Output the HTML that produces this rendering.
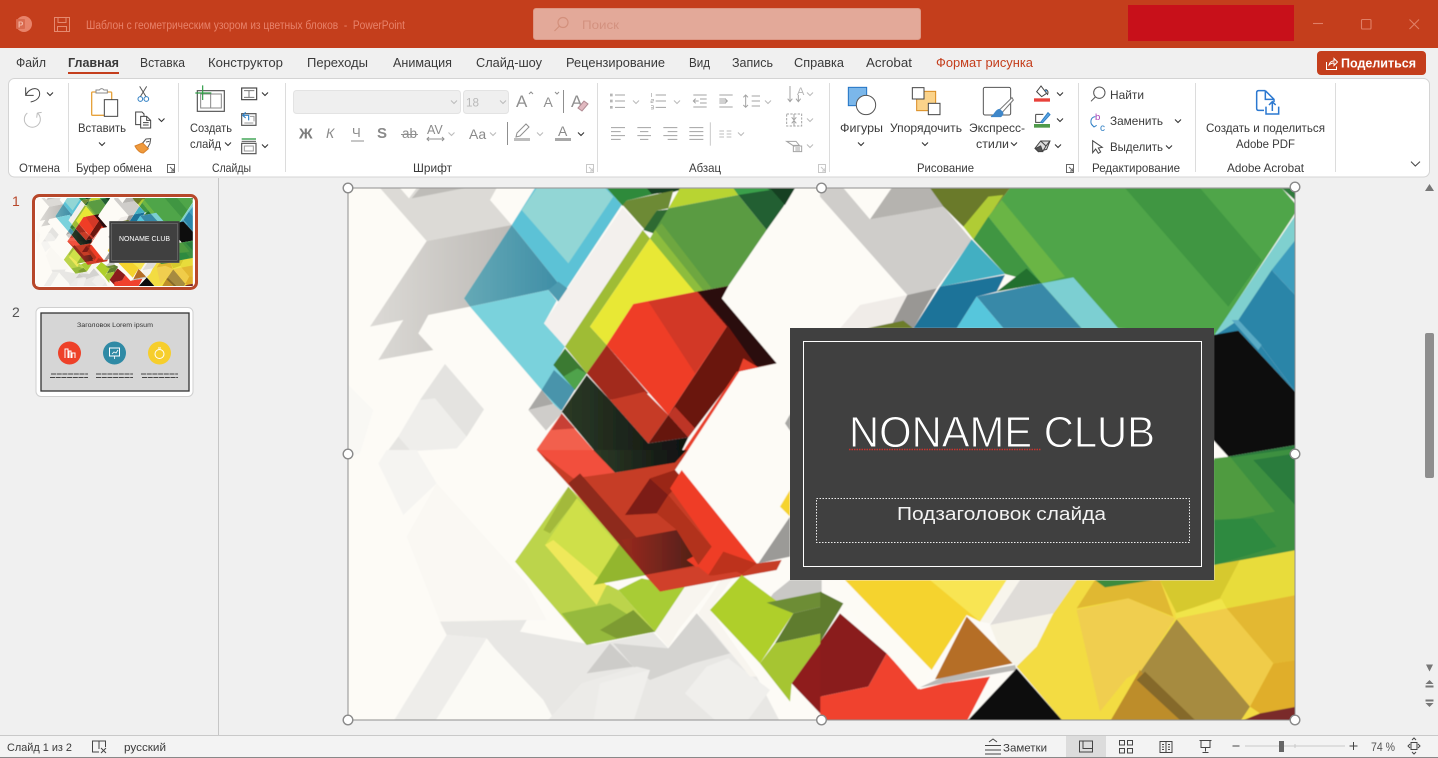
<!DOCTYPE html>
<html lang="ru"><head><meta charset="utf-8"><title>PowerPoint</title>
<style>
html,body{margin:0;padding:0;width:1438px;height:758px;overflow:hidden;background:#f0f0f0}
svg{position:absolute;left:0;top:0;font-family:"Liberation Sans","Noto Sans CJK SC",sans-serif}
text{fill:#3a3a3a}
</style></head><body>
<svg width="1438" height="758" viewBox="0 0 1438 758" xmlns="http://www.w3.org/2000/svg">
<defs>
<clipPath id="sc"><rect x="348" y="188" width="947" height="532"/></clipPath>
<filter id="soft" x="0" y="0" width="100%" height="100%"><feGaussianBlur stdDeviation=".55"/></filter>
<filter id="bt" x="0" y="0" width="100%" height="100%"><feGaussianBlur stdDeviation="2.2"/></filter>
<linearGradient id="g1" x1="0" x2="1" y1="0" y2="0"><stop offset="0" stop-color="#dcdad6"/><stop offset="1" stop-color="#bdbab6"/></linearGradient>
<linearGradient id="g2" x1="0" x2="1" y1="0" y2="0"><stop offset="0" stop-color="#65a9b6"/><stop offset="1" stop-color="#3f8ea6"/></linearGradient>
<linearGradient id="g3" x1="0" x2="1" y1="0" y2="0"><stop offset="0" stop-color="#2b3a26"/><stop offset="1" stop-color="#0f1110"/></linearGradient>
<linearGradient id="g4" x1="0" x2="1" y1="0" y2="0"><stop offset="0" stop-color="#9a2a20"/><stop offset="1" stop-color="#4e2018"/></linearGradient>
<g id="art" clip-path="url(#sc)">
<g filter="url(#soft)">
<rect x="340" y="180" width="965" height="550" fill="#fdfbf6"/>
<!-- upper-left quadrant -->
<g transform="translate(340 180) scale(.33333)">
<polygon points="120,24 470,24 450,60 515,135 260,183" fill="#dcdad6"/>
<polygon points="180,24 230,24 207,55" fill="#fdfbf6"/>
<polygon points="215,55 240,24 375,24" fill="#bebcb8"/>
<polygon points="260,183 515,135 372,355 390,380 265,405 235,460 280,510 115,540 190,420 90,440" fill="url(#g1)"/>
<polygon points="0,590 100,690 60,820 0,840" fill="#f9f8f4"/>
<polygon points="315,552 432,688 380,770 240,660" fill="#e4e3e0"/>
<polygon points="240,660 285,655 380,770 350,805 190,815 175,770" fill="#efeeeb"/>
<polygon points="120,845 175,770 240,845" fill="#e6e5e2"/>
<polygon points="585,24 800,24 845,75 680,325 655,310 515,135" fill="#5cc2d6"/>
<polygon points="590,24 795,24 820,50 685,250 545,90" fill="#92d6d5"/>
<polygon points="515,135 655,310 625,330 390,380 372,355" fill="url(#g2)"/>
<polygon points="625,330 655,305 682,325 655,365" fill="#4d9bb0"/>
<polygon points="390,380 625,330 650,362 612,430 675,500 642,555 705,625 660,695 605,630" fill="#7ad2dc"/>
<polygon points="605,630 642,570 705,628 665,692" fill="#4a94ab"/>
<polygon points="605,630 640,672 565,690" fill="#a9a8a5"/>
<polygon points="565,690 640,672 668,697 618,752" fill="#cfcdca"/>
<polygon points="848,82 908,150 675,500 612,430" fill="#f3f0ed"/>
<polygon points="800,24 1020,24 860,62 848,78" fill="#2f8a3a"/>
<polygon points="920,24 1040,24 1000,36 935,42" fill="#123f20"/>
<polygon points="1020,24 1180,24 1195,45 985,85" fill="#b8d432"/>
<polygon points="860,62 1000,32 985,85 950,92 915,150 848,75" fill="#6d8a35"/>
<polygon points="950,92 985,88 940,160 910,150" fill="#2f6a33"/>
<polygon points="908,150 930,175 750,440 800,495 740,580 675,500" fill="#9fbc36"/>
<polygon points="930,175 1070,335 880,372 800,495 750,440" fill="#e8e834"/>
<polygon points="985,85 1195,45 1280,150 1165,318 1085,332 945,150" fill="#5a9b42"/>
<polygon points="945,150 965,130 1115,325 1085,332" fill="#6ea73f"/>
<polygon points="930,175 945,150 1090,332 1065,337" fill="#8dbd3d"/>
<polygon points="1180,24 1365,24 1330,80 1280,150 1195,45" fill="#205f30"/>
<polygon points="1195,45 1180,24 1280,24 1290,30" fill="#3aa04c"/>
<polygon points="1290,24 1365,24 1335,75" fill="#133f20"/>
<polygon points="1070,335 1165,318 1145,355 1310,550 1195,575 1045,772 985,705 1160,440" fill="#6b1309"/>
<polygon points="1165,318 1145,355 1310,550 1250,560 1165,440 1075,335" fill="#2a0a08"/>
<polygon points="880,372 1070,335 1160,440 985,705 800,495" fill="#ef3d25"/>
<polygon points="925,365 1070,335 1160,440 1065,580" fill="#d23726"/>
<polygon points="800,495 925,640 810,660 740,580" fill="#a22a1c"/>
<polygon points="810,660 915,635 985,705 925,790" fill="#c63a28"/>
<polygon points="985,705 1045,772 925,790" fill="#66130b"/>
<polygon points="985,705 1005,680 1065,745 1045,772" fill="#bd3428"/>
<polygon points="675,505 740,580 705,630 640,555" fill="#3a7a30"/>
<polygon points="670,590 712,565 740,580 705,630" fill="#4fa34b"/>
<polygon points="740,585 810,660 925,790 1045,772 1010,845 790,845 665,695" fill="url(#g3)"/>
<polygon points="665,700 790,845 620,845 590,808" fill="#f2604d"/>
<polygon points="665,700 705,745 635,750" fill="#c84036"/>
<polygon points="1195,575 1210,535 1255,562" fill="#e8412a"/>
<polygon points="1190,575 1198,575 1022,845 1008,845" fill="#e8412a"/>
<polygon points="1335,730 1352,700 1352,755" fill="#a9a8a5"/>
</g>
<!-- upper-right quadrant -->
<g transform="translate(820 180) scale(.33333)">
<polygon points="0,24 70,24 150,118 370,80 455,180 350,325 262,345 0,50" fill="#cfcdca"/>
<polygon points="215,24 330,24 370,80 150,118" fill="#b5b3af"/>
<polygon points="120,375 262,345 210,445 60,445" fill="#f0ece8"/>
<polygon points="262,345 350,325 280,445 210,445" fill="#999794"/>
<polygon points="570,24 1385,24 1425,70 1425,100 1185,465 895,445 780,445 665,310 505,110" fill="#50a548"/>
<polygon points="915,24 1140,24 1325,240 1225,380" fill="#3f9642"/>
<polygon points="1385,24 1430,24 1430,65" fill="#2f7a3a"/>
<polygon points="330,24 570,24 505,110 430,140 370,80" fill="#6a7a2c"/>
<polygon points="505,50 550,45 460,178 430,140" fill="#b0cc34"/>
<polygon points="505,110 545,60 735,290 665,310" fill="#6bb545"/>
<polygon points="460,178 505,110 665,310 555,282" fill="#3f9642"/>
<polygon points="530,335 620,265 665,310" fill="#20702f"/>
<polygon points="455,178 555,282 360,320" fill="#43afc2"/>
<polygon points="360,320 555,285 530,335 470,350 410,445 280,445" fill="#1a7399"/>
<polygon points="470,350 665,310 785,445 550,445" fill="#3789a8"/>
<polygon points="470,350 550,445 410,445" fill="#57c6dc"/>
<polygon points="665,310 760,292 895,445 785,445" fill="#7ccfd2"/>
<polygon points="140,445 250,422 280,445" fill="#6d7d2a"/>
<polygon points="1430,100 1430,175 1255,420 1180,470" fill="#7fd0cf"/>
<polygon points="1430,175 1430,350 1355,270" fill="#3d9dbd"/>
<polygon points="1355,270 1430,350 1430,640 1325,500 1255,420" fill="#2a85a8"/>
<polygon points="1255,420 1325,500 1430,640 1255,452 1180,470" fill="#2a85a8"/>
<polygon points="1235,420 1255,420 1325,495 1315,510" fill="#5aabc5"/>
<polygon points="1180,465 1255,452 1430,640 1430,795 1225,830 1180,780" fill="#10100e"/>
<polygon points="1225,830 1430,795 1430,845 1180,845" fill="#2c7a3c"/>
</g>
<!-- lower-left quadrant -->
<g transform="translate(340 450) scale(.33333)">
<polygon points="115,40 140,0 230,0 290,100 190,195" fill="#f5f4f1"/>
<polygon points="200,260 290,100 560,400 620,510 300,515" fill="#faf8f3"/>
<polygon points="300,515 560,510 540,545 760,585 940,548 985,595 1070,490 1250,680 1320,815 640,815 440,565 320,555" fill="#e8e7e4"/>
<polygon points="160,815 320,555 440,565 285,815" fill="#eeedea"/>
<polygon points="285,815 440,570 610,750 645,815" fill="#fbfaf5"/>
<polygon points="740,670 810,580 880,650" fill="#cdccc9"/>
<polygon points="820,580 985,595 1070,490 1170,610 1060,640 930,690 880,650" fill="#d4d3d0"/>
<polygon points="725,700 890,650 930,660 760,815 620,815" fill="#ecebe8"/>
<polygon points="780,700 930,660 880,815 760,815" fill="#f0efec"/>
<polygon points="1035,730 1100,650 1165,625 1290,720 1220,815 1130,815" fill="#f0efec"/>
<polygon points="945,545 1035,410 1130,395 1015,540 985,592" fill="#f8f5ef"/>
<polygon points="1075,490 1150,380 1180,380 1110,480 1250,680 1230,680" fill="#f8f5ef"/>
<polygon points="525,335 685,110 850,275 760,405 805,405 835,420 945,545 740,585" fill="#bcd44b"/>
<polygon points="610,240 685,110 712,145 630,250" fill="#a3b93a"/>
<polygon points="615,285 710,145 835,285 765,400" fill="#cfe04a"/>
<polygon points="615,285 640,270 800,405 770,465" fill="#efe85a"/>
<polygon points="665,490 810,460 945,545 740,585" fill="#96ba3c"/>
<polygon points="780,540 880,480 945,545 830,565" fill="#7d9b33"/>
<polygon points="835,420 905,385 1035,410 945,545" fill="#a8cc35"/>
<polygon points="760,405 840,280 920,375 835,392" fill="#93b62e"/>
<polygon points="590,0 760,0 825,68 1005,35 1035,0 1045,0 1005,60 1250,340 1325,330 1310,360 960,425 690,110" fill="#c63d25"/>
<polygon points="590,0 760,0 825,68 700,85" fill="#f2503c"/>
<polygon points="760,0 1040,0 1005,38 825,68" fill="url(#g3)"/>
<polygon points="685,100 720,70 975,360 915,375" fill="#8e2a1d"/>
<polygon points="845,270 1010,240 1075,345 915,375" fill="url(#g4)"/>
<polygon points="855,195 930,85 985,135 950,190" fill="#7c1c12"/>
<polygon points="930,85 1005,60 1030,90 985,135" fill="#9a2618"/>
<polygon points="990,115 1025,60 1250,340 1180,350 1100,375 1040,330 1115,290" fill="#ef3e26"/>
<polygon points="950,190 985,135 1115,290 1075,345 1010,240" fill="#b2331f"/>
<polygon points="1105,375 1150,305 1250,340 1195,380" fill="#bd301d"/>
<polygon points="960,425 915,375 1075,350 1110,378 1190,365 1210,375" fill="#d0402b"/>
<polygon points="1255,340 1350,200 1350,320" fill="#9b9a97"/>
<polygon points="1320,170 1350,120 1350,200" fill="#f5d32e"/>
<polygon points="1300,430 1350,390 1445,390 1445,425 1280,458" fill="#c9c8c5"/>
<polygon points="1110,480 1205,375 1360,490 1260,640" fill="#afcf2c"/>
<polygon points="1280,458 1445,425 1445,470 1360,490" fill="#6d8d35"/>
<polygon points="1360,490 1445,470 1445,550 1305,580" fill="#5e7c2e"/>
<polygon points="1260,640 1305,580 1445,550 1445,575 1355,700 1350,755" fill="#a6c530"/>
<polygon points="1355,700 1445,575 1445,795" fill="#8f1e1c"/>
<polygon points="1320,815 1350,755 1395,815" fill="#fdfbf6"/>
</g>
<!-- lower-right quadrant -->
<g transform="translate(820 450) scale(.33333)">
<polygon points="1,425 70,460 1,575" fill="#5e7c2e"/>
<polygon points="1,575 60,490 200,610 145,710 1,740" fill="#8a1a1b"/>
<polygon points="1,740 145,710 200,610 300,718 370,700 510,680 440,815 1,815" fill="#f0432e"/>
<polygon points="770,390 1182,390 1182,345 1430,300 1430,815 730,815 590,650 700,490" fill="#f3dc42"/>
<polygon points="10,390 75,390 330,660 320,690 295,718" fill="#fdfbf5"/>
<polygon points="365,682 585,645 590,660 300,712" fill="#b9b8b5"/>
<polygon points="75,390 560,390 480,515 440,495 335,660" fill="#f5d32e"/>
<polygon points="330,390 560,390 480,515" fill="#f8e552"/>
<polygon points="440,500 578,640 345,688" fill="#b56e27"/>
<polygon points="560,390 600,390 510,520 480,515" fill="#f8f5ec"/>
<polygon points="600,390 770,390 700,490 510,525" fill="#dfdcd8"/>
<polygon points="510,525 700,490 650,590 590,650 540,600" fill="#f6f3e8"/>
<polygon points="770,475 825,390 1020,390 1060,500 925,445" fill="#e0b830"/>
<polygon points="770,480 925,445 1065,505 965,660 920,685 840,785" fill="#f0ce50"/>
<polygon points="1020,390 1182,390 1182,345 1260,330 1200,445 1070,490" fill="#d6c92f"/>
<polygon points="1260,330 1430,300 1430,435 1220,475 1200,445" fill="#e8dc3a"/>
<polygon points="1065,490 1205,447 1220,475 1070,508" fill="#f0e548"/>
<polygon points="1070,508 1290,770 1260,815 870,815 965,660" fill="#a68b40"/>
<polygon points="960,660 1085,815 870,815" fill="#bd8d2a"/>
<polygon points="950,690 975,665 1130,815 1085,815" fill="#85692a"/>
<polygon points="1070,505 1220,475 1360,640 1290,770" fill="#f0cc4a"/>
<polygon points="1220,475 1430,435 1430,630 1360,640" fill="#e3b833"/>
<polygon points="1290,770 1360,640 1430,630 1430,770 1320,790" fill="#e0ae2a"/>
<polygon points="1260,815 1320,790 1430,770 1430,815" fill="#7a2a2a"/>
<polygon points="825,390 1000,390 855,412" fill="#3d8b3d"/>
<polygon points="590,655 730,815 440,815" fill="#10100c"/>
<polygon points="1180,30 1430,-5 1430,300 1182,345" fill="#3c9040"/>
<polygon points="1182,25 1230,20 1365,185 1260,205 1182,210" fill="#4f9b40"/>
<polygon points="1182,210 1300,205 1370,290 1182,345" fill="#2f8a40"/>
<polygon points="1300,30 1430,10 1430,170" fill="#2a7c3c"/>
</g>
</g>
<!-- title box -->
<rect x="790" y="328" width="424" height="252" fill="#404040"/>
<rect x="803.500" y="341.500" width="398" height="225" fill="none" stroke="#fff" stroke-width="1"/>
</g>
</defs>

<!-- title bar -->
<rect x="0" y="0" width="1438" height="48" fill="#c43e1c"/>
<circle cx="24" cy="24" r="8" fill="#e8836a"/><rect x="16" y="19" width="9" height="10" rx="1" fill="#d96a4f"/>
<text x="18" y="27.500" font-size="8" font-weight="bold" style="fill:#f3b8a6">P</text>
<g fill="none" stroke="#e58a70" stroke-width="1"><rect x="54.500" y="17.500" width="15" height="14"/><path d="M58 17.500v5h8v-5M57.500 31.500v-5h9v5"/></g>
<text x="86" y="29" font-size="11.500" textLength="319" lengthAdjust="spacingAndGlyphs" style="fill:#e8826a">Шаблон с геометрическим узором из цветных блоков&#160;&#160;-&#160;&#160;PowerPoint</text>
<rect x="533.500" y="8.500" width="387" height="31" rx="2.500" fill="#e3a999" stroke="#dd9784"/>
<g fill="none" stroke="#d3907c" stroke-width="1.200"><circle cx="563" cy="22.500" r="5"/><path d="M559.500 26l-5 5"/></g>
<text x="582" y="29" font-size="12" textLength="37" lengthAdjust="spacingAndGlyphs" style="fill:#d3917f">Поиск</text>
<rect x="1128" y="5" width="166" height="36" fill="#c8101a"/>
<g fill="none" stroke="#e07f66" stroke-width="1.100"><path d="M1313 23.500h10"/><rect x="1361.500" y="19.500" width="9.500" height="9.500" rx="1"/><path d="M1409.500 19.500l9.500 9.500M1419 19.500l-9.500 9.500"/></g>

<!-- tabs -->
<g font-size="12.500">
<text x="16" y="67" textLength="30" lengthAdjust="spacingAndGlyphs">Файл</text>
<text x="68" y="67" textLength="51" lengthAdjust="spacingAndGlyphs" font-weight="bold">Главная</text>
<text x="140" y="67" textLength="45" lengthAdjust="spacingAndGlyphs">Вставка</text>
<text x="208" y="67" textLength="75" lengthAdjust="spacingAndGlyphs">Конструктор</text>
<text x="307" y="67" textLength="61" lengthAdjust="spacingAndGlyphs">Переходы</text>
<text x="393" y="67" textLength="59" lengthAdjust="spacingAndGlyphs">Анимация</text>
<text x="476" y="67" textLength="66" lengthAdjust="spacingAndGlyphs">Слайд-шоу</text>
<text x="566" y="67" textLength="99" lengthAdjust="spacingAndGlyphs">Рецензирование</text>
<text x="689" y="67" textLength="21" lengthAdjust="spacingAndGlyphs">Вид</text>
<text x="732" y="67" textLength="41" lengthAdjust="spacingAndGlyphs">Запись</text>
<text x="794" y="67" textLength="50" lengthAdjust="spacingAndGlyphs">Справка</text>
<text x="866" y="67" textLength="46" lengthAdjust="spacingAndGlyphs">Acrobat</text>
<text x="936" y="67" textLength="97" lengthAdjust="spacingAndGlyphs" style="fill:#c43e1c">Формат рисунка</text>
</g>
<rect x="68" y="72" width="51" height="2" fill="#c43e1c"/>
<rect x="1317" y="51" width="109" height="24" rx="4" fill="#c43e1c"/>
<g fill="none" stroke="#fff" stroke-width="1"><path d="M1326.500 62v7.500h10v-3M1329 65c.5-2.500 2.500-4 5-4v-2.500l3.500 3.500-3.500 3.500v-2.500c-2 0-3.500.5-5 2z"/></g>
<text x="1341" y="67.500" font-size="12.500" font-weight="bold" textLength="75" lengthAdjust="spacingAndGlyphs" style="fill:#fff">Поделиться</text>

<!-- ribbon panel -->
<rect x="8.500" y="78.500" width="1421" height="98.500" rx="6" fill="#fff" stroke="#d4d4d4"/>
<path d="M68.500 83v89M178.500 83v89M285.500 83v89M597.500 83v89M829.500 83v89M1078.500 83v89M1195.500 83v89M1335.500 83v89" stroke="#dcdcdc" fill="none"/>

<!-- clipboard/undo/slides icons -->
<g transform="translate(0 78) scale(.33333)" fill="none" stroke-width="3">
<path d="M77 28V52H101M77 52C90 24 125 26 118 54 114 65 102 70 92 72" stroke="#444"/>
<path d="M82 105A24 24 0 1 0 112 105M112 105l-2 14M112 105l13 -2" stroke="#bdbdbd"/>
<rect x="275" y="42" width="60" height="70" rx="3" stroke="#e6a23c" stroke-width="4" fill="#fff"/>
<path d="M288 45V36H298Q305 28 312 36H322V45Z" stroke="#8a8a8a" fill="#fff"/>
<rect x="313" y="65" width="40" height="50" stroke="#444" fill="#fff"/>
<path d="M419 25L438 56M440 25L421 56" stroke="#555"/>
<circle cx="421" cy="63" r="7" stroke="#2f7fc4"/><circle cx="439" cy="63" r="7" stroke="#2f7fc4"/>
<path d="M422 140H407V102H426L432 108V115" stroke="#444"/>
<path d="M422 115H440L452 127V150H422ZM440 115V127H452M429 134H446M429 141H446" stroke="#444"/>
<path d="M405 204L428 195 445 212 430 225C420 225 410 215 405 204Z" fill="#ef9a3d" stroke="#d9822b"/>
<path d="M428 195L438 183 452 182 450 196 443 209M438 192L448 190" stroke="#555"/>
<rect x="592" y="38" width="81" height="62" stroke="#555" stroke-width="3.500" fill="#fff"/>
<path d="M602 48H664V90H602ZM632 48V90" stroke="#888"/>
<path d="M586 45H634M608 22V66" stroke="#2e9c45" stroke-width="3.500"/>
<rect x="725" y="30" width="45" height="35" stroke="#444" stroke-width="3.500"/><path d="M732 38H763M747 38V58M732 58H763" stroke="#777"/>
<rect x="725" y="107" width="43" height="35" stroke="#555" stroke-width="3.500"/><path d="M733 135H760M750 115H762V130" stroke="#999"/>
<path d="M746 127V112H730M737 103L728 112 737 120" stroke="#2f7fc4" stroke-width="3.500"/>
<path d="M725 183H768" stroke="#2e9c45" stroke-width="4"/><path d="M725 190H768" stroke="#555"/>
<rect x="725" y="196" width="43" height="31" stroke="#555" stroke-width="3.500"/><rect x="733" y="204" width="27" height="15" stroke="#999"/>
</g>
<rect x="293.500" y="90.500" width="167" height="23" rx="3" fill="#efefef" stroke="#e3e3e3"/>
<rect x="463.500" y="90.500" width="45" height="23" rx="3" fill="#efefef" stroke="#e3e3e3"/>
<text x="466" y="106.500" font-size="12" textLength="13" lengthAdjust="spacingAndGlyphs" style="fill:#b9b9b9">18</text>
<!-- font group -->
<g font-size="14">
<text x="516" y="107" font-size="17" style="fill:#909090">A</text>
<text x="543.500" y="107" font-size="14" style="fill:#909090">A</text>
<text x="571" y="107" font-size="17" style="fill:#909090">A</text>
<text x="299" y="138.500" font-size="15" font-weight="bold" style="fill:#7d7d7d">Ж</text>
<text x="326" y="138" font-size="14" font-style="italic" style="fill:#8a8a8a">К</text>
<text x="352" y="137" font-size="13" style="fill:#8a8a8a">Ч</text>
<text x="377" y="138" font-size="15" font-weight="bold" style="fill:#8a8a8a">S</text>
<text x="402" y="138" font-size="13.500" style="fill:#8a8a8a">ab</text>
<text x="427" y="134" font-size="12.500" style="fill:#8a8a8a">AV</text>
<text x="469" y="139" font-size="14" style="fill:#8a8a8a">Aa</text>
<text x="558" y="136" font-size="14" style="fill:#8a8a8a">A</text>
</g>
<g fill="none" stroke="#8f8f8f" stroke-width="1">
<path d="M529 94l2-2 2 2M555 92l2 2 2-2M563.500 90v23M351 141h13M401 134.500h17M427 139h17M429 137l-2 2 2 2M442 137l2 2-2 2M507.500 122v23"/>
<path d="M578 108l6-7 4 3-6 7z" fill="#e0b9c0" stroke="#b08a92"/>
<path d="M517 133l9-9 3 3-9 9-4 1z"/>
</g>
<rect x="514" y="138" width="16" height="3" fill="#bdbdbd"/><rect x="555" y="138" width="16" height="3" fill="#a8a8a8"/>
<!-- paragraph icons -->
<g transform="translate(590 0) scale(.33333)" fill="none" stroke="#a3a3a3" stroke-width="3">
<path d="M75 285H105M75 303H105M75 322H105M197 285H228M197 303H228M197 322H228"/>
<path d="M60 281h8v8h-8zM60 299h8v8h-8zM60 318h8v8h-8z" fill="#b5b5b5" stroke="none"/>
<path d="M184 279v12M183 298h7v5h-7v5h7M183 317h7v5h-7M190 322v5h-7" stroke-width="2"/>
<path d="M310 285H350M330 297H350M330 309H350M310 321H350M326 303H310M317 296L310 303 317 310"/>
<path d="M388 285H428M388 297H408M388 309H408M388 321H428M388 303H412M405 296L412 303 405 310"/>
<path d="M485 288H510M485 303H510M485 318H510M467 285V322M460 292L467 285 474 292M460 315L467 322 474 315"/>
<path d="M600 258V305M593 296L600 305 607 296M625 285V305M618 296L625 305 632 296"/>
<path d="M590 342H635V378H590Z" stroke-dasharray="7 4"/><path d="M612 342V358M605 352L612 360 619 352M612 378V364M605 370L612 362 619 370"/>
<path d="M590 424H618L628 436H608ZM610 438H635V455H610ZM616 444H630M616 450H630"/>
<path d="M63 383H105M63 395H92M63 407H105M63 418H92"/>
<path d="M142 383H183M150 395H175M142 407H183M150 418H175"/>
<path d="M220 383H262M233 395H262M220 407H262M233 418H262"/>
<path d="M298 383H340M298 395H340M298 407H340M298 418H340"/>
<path d="M361 367V437" stroke="#c9c9c9"/>
<path d="M388 393H402M388 402H402M388 411H402M410 393H424M410 402H424M410 411H424" stroke="#bdbdbd"/>
</g>
<text x="797" y="95" font-size="11" style="fill:#b5b5b5">A</text>
<!-- drawing icons -->
<g transform="translate(590 0) scale(.33333)" fill="none" stroke-width="3">
<rect x="775" y="262" width="55" height="55" fill="#7bb7ea" stroke="#2272c3"/>
<circle cx="828" cy="315" r="29" fill="#fff" stroke="#555"/>
<rect x="980" y="274" width="57" height="58" fill="#fbd38a" stroke="#d98a1f"/>
<rect x="967" y="263" width="35" height="34" fill="#fff" stroke="#444"/>
<rect x="1015" y="310" width="35" height="34" fill="#fff" stroke="#444"/>
<rect x="1180" y="262" width="82" height="83" rx="5" fill="#fff" stroke="#555"/>
<path d="M1266 293L1228 330 1236 338 1270 300Z" fill="#fff" stroke="#777"/>
<path d="M1228 328C1215 330 1215 345 1203 350H1232C1240 345 1240 338 1236 335Z" fill="#3f87c9" stroke="#3f87c9"/>
<rect x="1332" y="295" width="48" height="10" fill="#e8413a" stroke="none"/>
<path d="M1353 258L1340 275 1355 290 1370 280ZM1366 268Q1378 272 1372 285" stroke="#444"/>
<path d="M1366 270l4 4" stroke="#2f7fc4" stroke-width="4"/>
<rect x="1332" y="372" width="48" height="11" fill="#4f9a4a" stroke="none"/>
<path d="M1337 343H1360M1337 343V367H1358" stroke="#444"/>
<path d="M1352 367L1374 338 1380 344 1358 368Z" fill="#5da6e4" stroke="#2f7fc4"/>
<path d="M1335 445L1352 423H1380L1370 448 1345 455Z M1352 423L1368 438 1358 455M1368 438L1380 423" stroke="#444" fill="#ddd"/>
<path d="M1336 446L1346 455 1358 455 1352 438Z" fill="#555" stroke="#444"/>
</g>
<!-- editing icons -->
<g transform="translate(1030 0) scale(.33333)" fill="none" stroke-width="3">
<circle cx="208" cy="278" r="17" stroke="#555"/><path d="M196 291L183 304" stroke="#555"/>
<path d="M196 350C180 352 178 372 192 380M184 372L192 381 200 376" stroke="#2f7fc4"/>
<path d="M188 422V458L197 447 205 460 212 456 205 444 217 442Z" stroke="#444"/>
<path d="M706 272H686Q680 272 680 278V325Q680 331 686 331H702M706 272L732 298V306M706 272V298H732" stroke="#2b78d0" stroke-width="4.500"/>
<path d="M708 320V342H746V320M727 333V305M717 315L727 305 737 315" stroke="#2b78d0" stroke-width="4.500"/>
<path d="M1143 485L1156 498 1170 485" stroke="#444"/>
</g>
<text x="1095" y="120" font-size="9.500" style="fill:#a63fb5">b</text>
<text x="1100" y="131" font-size="10" style="fill:#2f7fc4">c</text>
<!-- launchers -->
<g fill="none" stroke="#666" stroke-width="1"><path d="M167.500 164.500h7v8h-7zM170 167l4 4M171 171h3v-3M1066.500 164.500h7v8h-7zM1069 167l4 4M1070 171h3v-3"/></g>
<g fill="none" stroke="#c8c8c8" stroke-width="1"><path d="M586.500 164.500h7v8h-7zM589 167l4 4M590 171h3v-3M818.500 164.500h7v8h-7zM821 167l4 4M822 171h3v-3"/></g>
<!-- chevrons -->
<path fill="none" stroke="#333" stroke-width="1.100" d="M47 92.500l3 3 3-3M99 142.500l3 3 3-3M158.500 118.500l3 3 3-3M225 142.500l3 3 3-3M262 92.500l3 3 3-3M262 144.500l3 3 3-3M578 132.500l3 3 3-3M858 142.500l3 3 3-3M922 142.500l3 3 3-3M1011 142.500l3 3 3-3M1057 92.500l3 3 3-3M1057 118.500l3 3 3-3M1055 144.500l3 3 3-3M1175 119.500l3 3 3-3M1166 145.500l3 3 3-3"/>
<path fill="none" stroke="#bcbcbc" stroke-width="1.100" d="M451 100.500l3 3 3-3M500 100.500l3 3 3-3M448.500 132.500l3 3 3-3M490 132.500l3 3 3-3M537 132.500l3 3 3-3M633 100.500l3 3 3-3M674 100.500l3 3 3-3M765 100.500l3 3 3-3M807 92.500l3 3 3-3M807 118.500l3 3 3-3M807 144.500l3 3 3-3M738 132.500l3 3 3-3"/>
<!-- ribbon labels -->
<g font-size="11.800">
<text x="78" y="132" textLength="48" lengthAdjust="spacingAndGlyphs">Вставить</text>
<text x="190" y="132" textLength="42" lengthAdjust="spacingAndGlyphs">Создать</text>
<text x="190" y="148" textLength="31" lengthAdjust="spacingAndGlyphs">слайд</text>
<text x="840" y="132" textLength="43" lengthAdjust="spacingAndGlyphs">Фигуры</text>
<text x="890" y="132" textLength="72" lengthAdjust="spacingAndGlyphs">Упорядочить</text>
<text x="969" y="132" textLength="56" lengthAdjust="spacingAndGlyphs">Экспресс-</text>
<text x="976" y="148" textLength="33" lengthAdjust="spacingAndGlyphs">стили</text>
<text x="1110" y="99" textLength="34" lengthAdjust="spacingAndGlyphs">Найти</text>
<text x="1110" y="125" textLength="53" lengthAdjust="spacingAndGlyphs">Заменить</text>
<text x="1110" y="151" textLength="53" lengthAdjust="spacingAndGlyphs">Выделить</text>
<text x="1206" y="132" textLength="119" lengthAdjust="spacingAndGlyphs">Создать и поделиться</text>
<text x="1236" y="148" textLength="59" lengthAdjust="spacingAndGlyphs">Adobe PDF</text>
<text x="19" y="172" textLength="41" lengthAdjust="spacingAndGlyphs">Отмена</text>
<text x="76" y="172" textLength="76" lengthAdjust="spacingAndGlyphs">Буфер обмена</text>
<text x="212" y="172" textLength="39" lengthAdjust="spacingAndGlyphs">Слайды</text>
<text x="413" y="172" textLength="39" lengthAdjust="spacingAndGlyphs">Шрифт</text>
<text x="689" y="172" textLength="32" lengthAdjust="spacingAndGlyphs">Абзац</text>
<text x="917" y="172" textLength="57" lengthAdjust="spacingAndGlyphs">Рисование</text>
<text x="1092" y="172" textLength="88" lengthAdjust="spacingAndGlyphs">Редактирование</text>
<text x="1227" y="172" textLength="77" lengthAdjust="spacingAndGlyphs">Adobe Acrobat</text>
</g>

<!-- left pane -->
<rect x="218" y="178" width="1" height="557" fill="#c6c6c6"/>
<text x="12" y="206" font-size="14" style="fill:#b7472a">1</text>
<text x="12" y="317" font-size="14" style="fill:#555">2</text>
<rect x="33.500" y="195.500" width="163" height="93" rx="6" fill="#fff" stroke="#b7472a" stroke-width="3"/>
<svg x="36" y="198" width="157" height="88" viewBox="348 188 947 532"><use href="#art" filter="url(#bt)"/></svg>
<text x="119" y="241" font-size="7.500" textLength="51" lengthAdjust="spacingAndGlyphs" style="fill:#fff">NONAME CLUB</text>
<rect x="36" y="307.500" width="157" height="89" rx="5" fill="#fff" stroke="#cfcfcf"/>
<rect x="41" y="313" width="148" height="78" fill="#d6d6d6" stroke="#333" stroke-width="1.300"/>
<text x="77" y="327" font-size="6.500" textLength="76" lengthAdjust="spacingAndGlyphs" style="fill:#333">Заголовок Lorem ipsum</text>
<circle cx="69.500" cy="353" r="11.500" fill="#ee4129"/><circle cx="114.500" cy="353" r="11.500" fill="#2f8aa5"/><circle cx="159.500" cy="353" r="11.500" fill="#f6ce2c"/>
<path d="M65 358v-9h3v9M69 358v-7h2v7M72 358v-5h3v5" stroke="#fff" fill="none"/>
<rect x="109.500" y="348" width="10" height="8" fill="none" stroke="#fff"/><path d="M112 354l2-2 2 1 2-3M114.500 356v3" stroke="#fff" fill="none" stroke-width=".8"/>
<circle cx="159.500" cy="354" r="4.500" fill="none" stroke="#fff"/><path d="M158 348h3" stroke="#fff"/>
<path d="M51 374h37M50 377.500h38M96 374h37M96 377.500h37M141 374h37M142 377.500h36" stroke="#444" stroke-width=".9" stroke-dasharray="5 .7" fill="none"/>

<!-- slide -->
<use href="#art"/>
<rect x="816.500" y="498.500" width="373" height="44" fill="none" stroke="#eee" stroke-width="1" stroke-dasharray="1.500 1.500"/>
<text x="849" y="447" font-size="44" textLength="306" lengthAdjust="spacingAndGlyphs" style="fill:#fff;stroke:#404040;stroke-width:.9">NONAME CLUB</text>
<path d="M849 449.500h192" stroke="#c8342e" stroke-width="1.500" stroke-dasharray="1.500 1" fill="none"/>
<text x="897" y="520" font-size="18.500" textLength="209" lengthAdjust="spacingAndGlyphs" style="fill:#f2f2f2">Подзаголовок слайда</text>
<rect x="348" y="188" width="947" height="532" fill="none" stroke="#8f8f8f"/>
<g fill="#fff" stroke="#8a8a8a" stroke-width="1.400">
<circle cx="348" cy="188" r="4.800"/><circle cx="821.500" cy="188" r="4.800"/><circle cx="1295" cy="187" r="4.800"/>
<circle cx="348" cy="454" r="4.800"/><circle cx="1295" cy="454" r="4.800"/>
<circle cx="348" cy="720" r="4.800"/><circle cx="821.500" cy="720" r="4.800"/><circle cx="1295" cy="720" r="4.800"/>
</g>
<!-- scrollbar -->
<rect x="1425" y="333" width="9" height="145" rx="2" fill="#8e8e8e"/>
<g fill="#777"><path d="M1425 191l4.500-7 4.500 7zM1426 664.500l3.500 7 3.500-7z"/>
<path d="M1425.500 684l4-4 4 4zM1425.500 685.500h8v2h-8zM1425.500 699.500h8v2h-8zM1425.500 703l4 4 4-4z"/></g>

<!-- status bar -->
<rect x="0" y="735" width="1438" height="22" fill="#f3f3f3"/>
<rect x="0" y="735" width="1438" height="1" fill="#c9c9c9"/>
<rect x="0" y="757" width="1438" height="1" fill="#888"/>
<rect x="1066" y="736" width="40" height="21" fill="#dcdcdc"/>
<g font-size="11">
<text x="7" y="751" textLength="65" lengthAdjust="spacingAndGlyphs">Слайд 1 из 2</text>
<text x="124" y="751" textLength="42" lengthAdjust="spacingAndGlyphs">русский</text>
<text x="1003" y="751.500" textLength="44" lengthAdjust="spacingAndGlyphs">Заметки</text>
<text x="1371" y="751" font-size="12" textLength="24" lengthAdjust="spacingAndGlyphs" style="fill:#555">74 %</text>
</g>
<g fill="none" stroke="#444" stroke-width="1">
<path d="M99 752h-6.500v-11h9l4 0v6M99 741v8M101 748l5 5M106 748l-5 5"/>
<path d="M985 745.500h16M985 750h16M985 754h16M989 742l4-3 4 3"/>
<rect x="1079.500" y="741" width="13" height="11"/><path d="M1083 741v7.500h9"/>
<rect x="1119.500" y="740.500" width="5" height="4.500"/><rect x="1127.500" y="740.500" width="5" height="4.500"/><rect x="1119.500" y="748.500" width="5" height="4.500"/><rect x="1127.500" y="748.500" width="5" height="4.500"/>
<path d="M1160 741.500h12v11h-12zM1166 741.500v11M1162 744.500h2M1162 747h2M1162 749.500h2M1168 744.500h2M1168 747h2M1168 749.500h2"/>
<path d="M1199.500 740.500h12M1201 740.500v7h9v-7M1205.500 747.500v4M1202.500 752.500h6"/>
<path d="M1232.500 746h7M1349.500 746h8M1353.500 742v8"/>
<rect x="1411" y="742.500" width="6" height="7"/><path d="M1412 740l2-2 2 2M1412 752l2 2 2-2M1410 744l-2 2 2 2M1418 744l2 2-2 2"/>
</g>
<path d="M1245 746h100M1295 744v4" stroke="#c8c8c8" fill="none"/>
<rect x="1279" y="741" width="5" height="11" fill="#666"/>
</svg>
</body></html>
